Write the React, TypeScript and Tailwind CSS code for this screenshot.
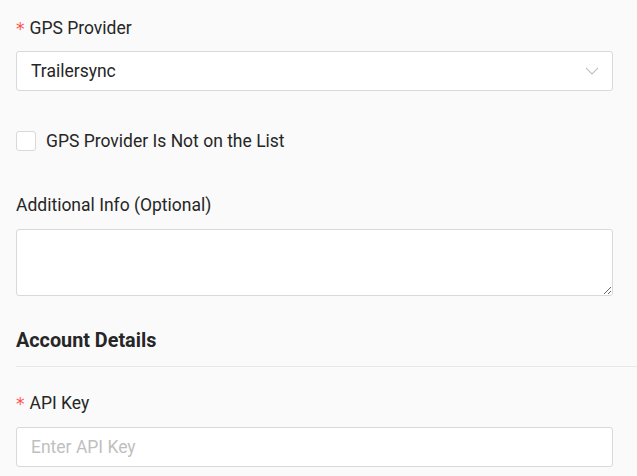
import { useState } from "react";

function RequiredLabel({ children }: { children: React.ReactNode }) {
  return (
    <label className="flex items-center h-6 text-[17.5px] text-[#262626]">
      <span className="mr-[5px] mt-[2px] text-[#ff4d4f] text-[17px] leading-none font-['DejaVu_Sans',sans-serif]">*</span>
      {children}
    </label>
  );
}

export default function App() {
  const [notListed, setNotListed] = useState(false);

  return (
    <div className="min-h-screen bg-[#fafafa] font-['Roboto',sans-serif] text-[#262626] pl-4 pt-4">
      <div className="pr-6">
        {/* GPS Provider */}
        <RequiredLabel>GPS Provider</RequiredLabel>
        <div className="mt-[11px] flex items-center h-10 px-[14px] bg-white border border-[#d9d9d9] rounded-[3px]">
          <span className="flex-1 text-[17.5px]">Trailersync</span>
          <svg width="14" height="8" viewBox="0 0 14 8" fill="none" className="mr-[-1px]">
            <path d="M1 0.8L7 7L13 0.8" stroke="#bfbfbf" strokeWidth="1.1" />
          </svg>
        </div>

        {/* Not on list */}
        <label className="mt-[38px] flex items-center gap-[10px] cursor-pointer">
          <input
            type="checkbox"
            checked={notListed}
            onChange={(e) => setNotListed(e.target.checked)}
            className="appearance-none w-5 h-5 bg-white border border-[#d9d9d9] rounded-[3px]"
          />
          <span className="text-[17.5px] leading-6">GPS Provider Is Not on the List</span>
        </label>

        {/* Additional info */}
        <div className="mt-[40px] h-6 flex items-center text-[17.5px]">Additional Info (Optional)</div>
        <textarea className="mt-[12px] block w-full h-[67px] bg-white border border-[#d9d9d9] rounded-[3px] px-[15px] py-2 text-[17.5px] outline-none" />
      </div>

      {/* Account details */}
      <div className="mt-[33px] pb-[13px] border-b border-[#e8e8e8]">
        <h3 className="h-6 flex items-center text-[19.8px] font-bold text-[#262626]">Account Details</h3>
      </div>

      <div className="pr-6 mt-[24px]">
        <RequiredLabel>API Key</RequiredLabel>
        <input
          placeholder="Enter API Key"
          className="mt-[12px] block w-full h-10 px-[14px] bg-white border border-[#d9d9d9] rounded-[3px] text-[17.5px] outline-none placeholder:text-[#bfbfbf]"
        />
      </div>
    </div>
  );
}
